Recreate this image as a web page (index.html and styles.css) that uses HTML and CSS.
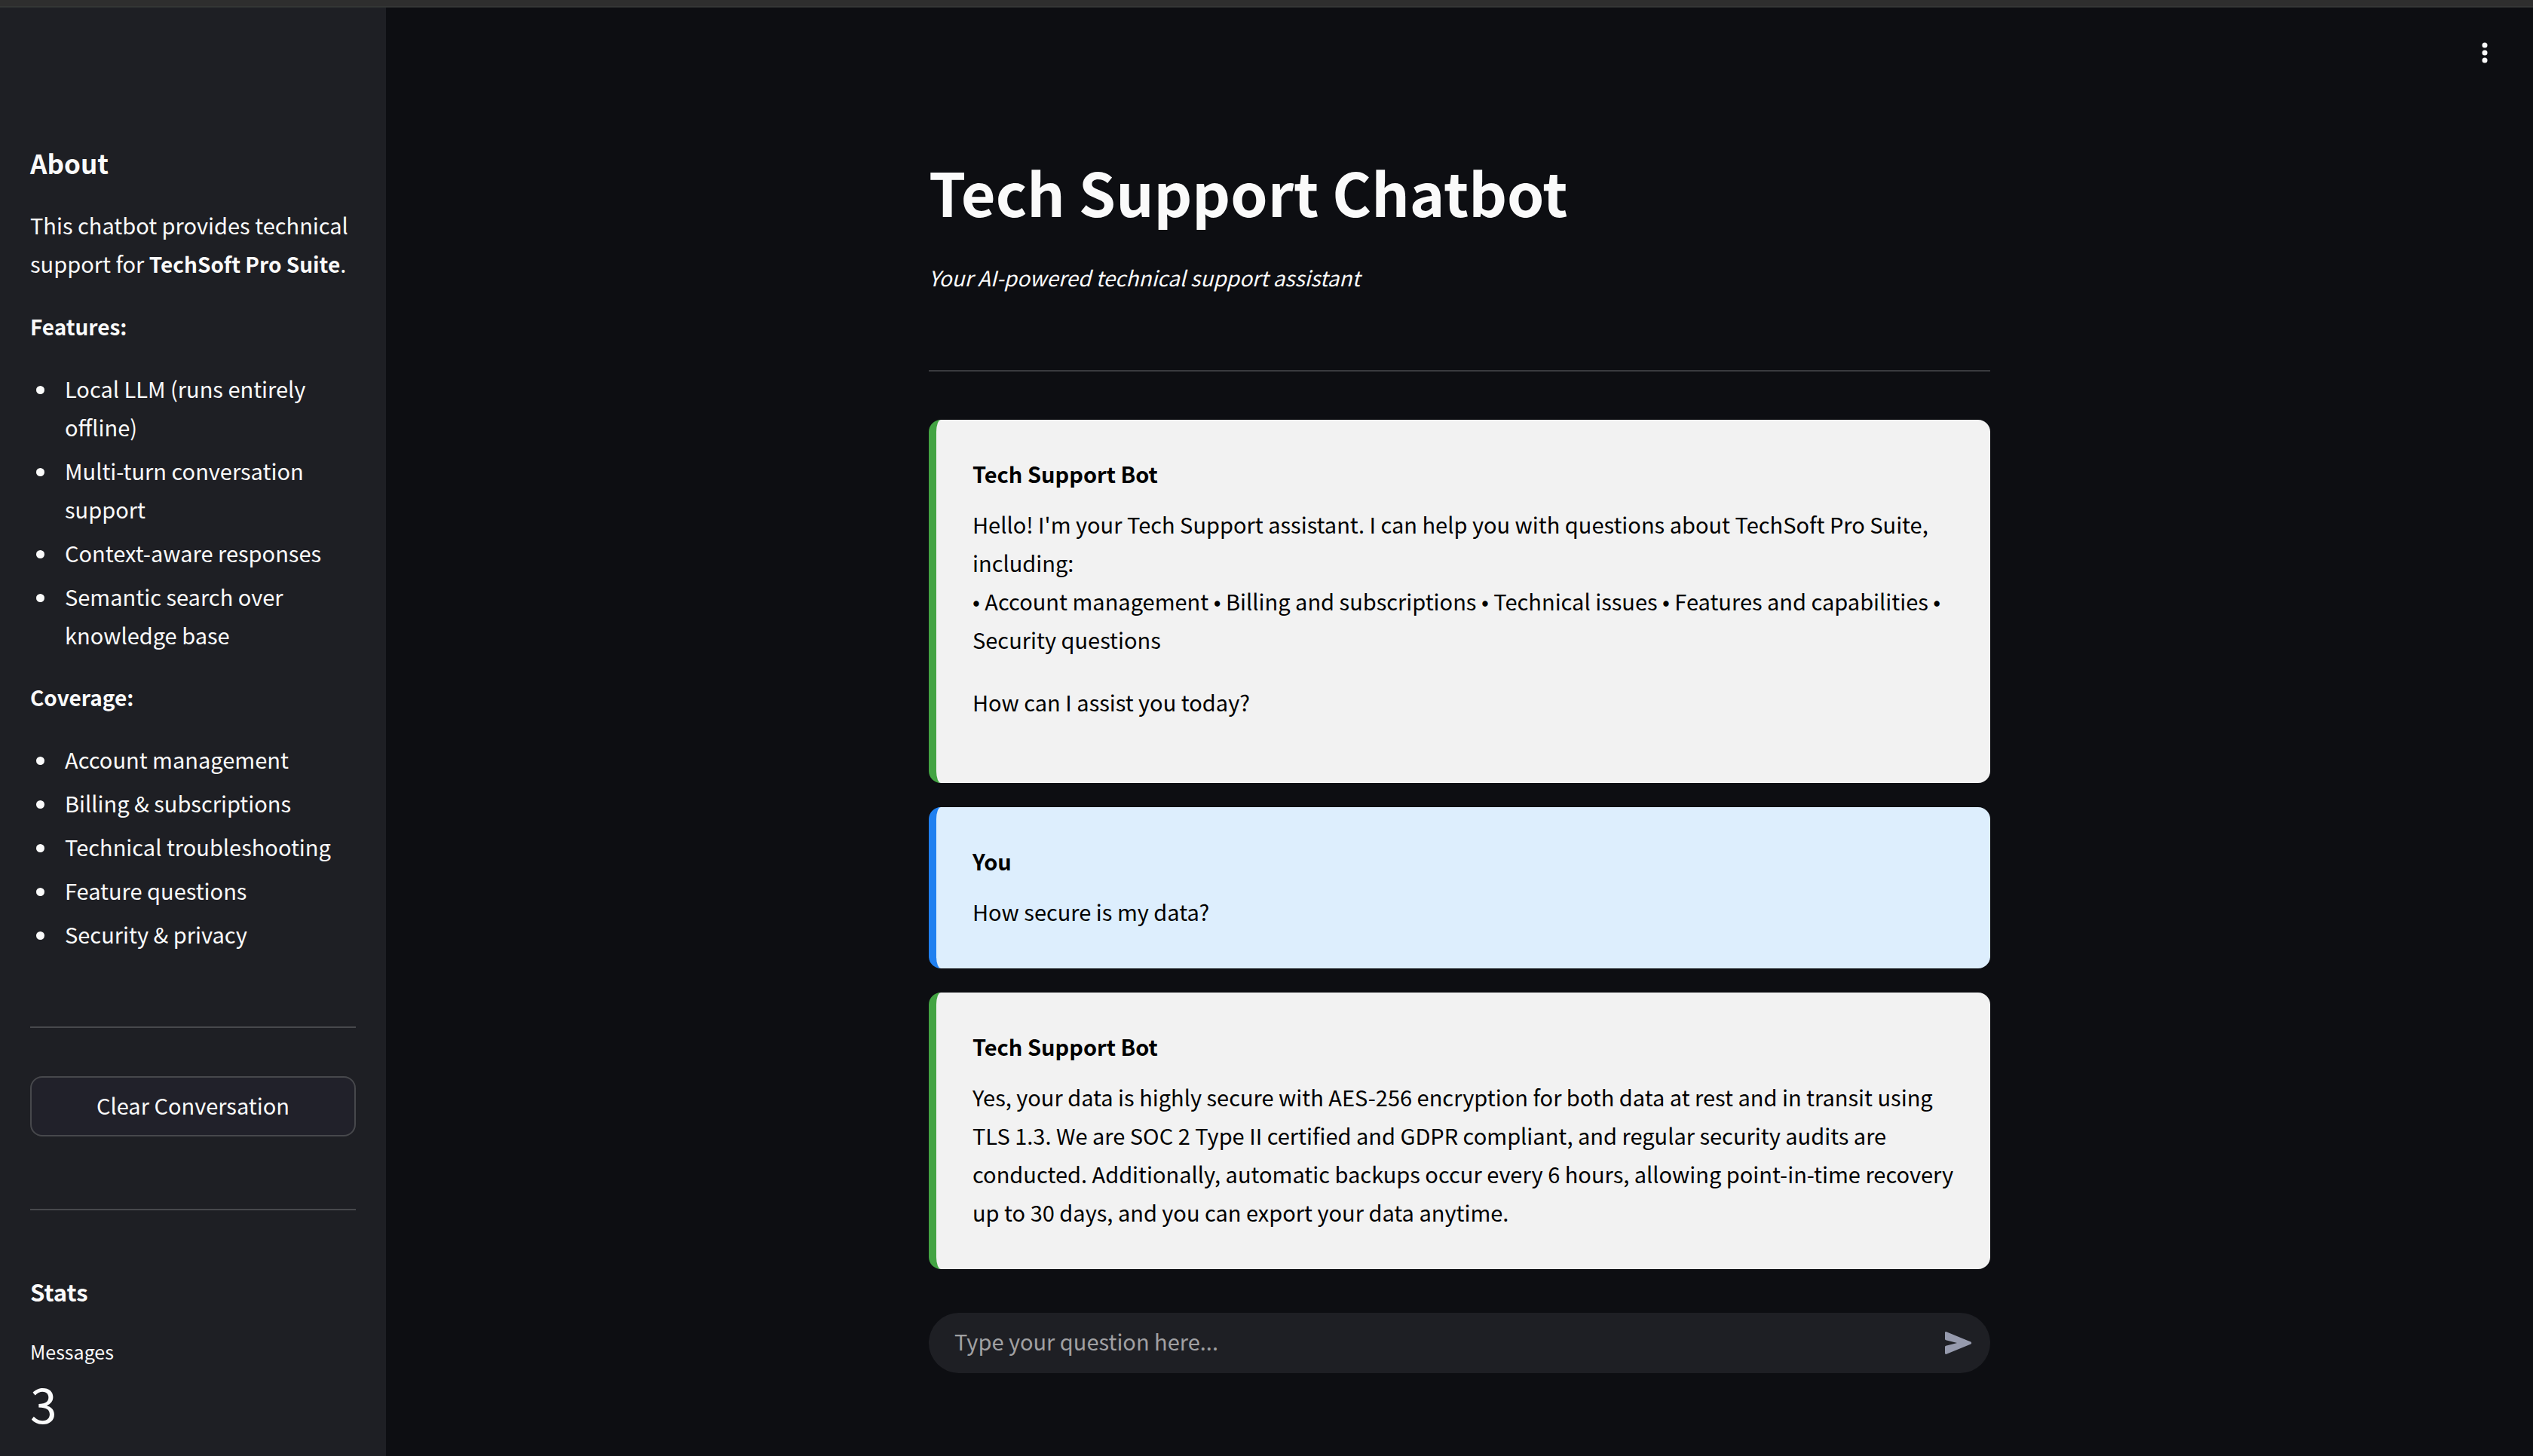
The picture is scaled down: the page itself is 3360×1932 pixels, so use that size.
FILE: index.html
```html
<!DOCTYPE html>
<html lang="en">
<head>
<meta charset="utf-8">
<meta name="viewport" content="width=device-width, initial-scale=1">
<title>Tech Support Chatbot</title>
<link rel="stylesheet" href="styles.css">
</head>
<body>
<div class="topbar"></div>
<div class="app">
  <aside class="sidebar">
    <h2 class="sidebar-title">About</h2>
    <p>This chatbot provides technical support for <strong>TechSoft Pro Suite</strong>.</p>
    <p><strong>Features:</strong></p>
    <ul class="list">
      <li>Local LLM (runs entirely offline)</li>
      <li>Multi-turn conversation support</li>
      <li>Context-aware responses</li>
      <li>Semantic search over knowledge base</li>
    </ul>
    <p><strong>Coverage:</strong></p>
    <ul class="list">
      <li>Account management</li>
      <li>Billing &amp; subscriptions</li>
      <li>Technical troubleshooting</li>
      <li>Feature questions</li>
      <li>Security &amp; privacy</li>
    </ul>
    <hr class="rule">
    <button class="clear" type="button">Clear Conversation</button>
    <hr class="rule">
    <h3 class="stats-title">Stats</h3>
    <dl class="metric">
      <dt>Messages</dt>
      <dd>3</dd>
    </dl>
  </aside>
  <main class="main">
    <header class="toolbar">
      <button class="menu" type="button" aria-label="Main menu">
        <svg width="40" height="40" viewBox="0 0 40 40" fill="currentColor" aria-hidden="true"><circle cx="20" cy="10" r="3.5"/><circle cx="20" cy="20" r="3.5"/><circle cx="20" cy="30" r="3.5"/></svg>
      </button>
    </header>
    <div class="column">
      <h1 class="title">Tech Support Chatbot</h1>
      <p class="subtitle"><em>Your AI-powered technical support assistant</em></p>
      <hr class="rule">
      <section class="messages">
        <article class="message bot">
          <strong class="author">Tech Support Bot</strong>
          <p>Hello! I'm your Tech Support assistant. I can help you with questions about TechSoft Pro Suite, including:<br>• Account management • Billing and subscriptions • Technical issues • Features and capabilities • Security questions</p>
          <p class="closing">How can I assist you today?</p>
        </article>
        <article class="message user">
          <strong class="author">You</strong>
          <p>How secure is my data?</p>
        </article>
        <article class="message bot">
          <strong class="author">Tech Support Bot</strong>
          <p>Yes, your data is highly secure with AES-256 encryption for both data at rest and in transit using TLS 1.3. We are SOC 2 Type II certified and GDPR compliant, and regular security audits are conducted. Additionally, automatic backups occur every 6 hours, allowing point-in-time recovery up to 30 days, and you can export your data anytime.</p>
        </article>
      </section>
      <form class="composer">
        <input type="text" aria-label="Your question" placeholder="Type your question here...">
        <button class="send" type="button" aria-label="Send message">
          <svg width="36" height="30" viewBox="0 0 36 30" fill="currentColor" aria-hidden="true"><path d="M0 1.6Q0 -.4 2 .3L34.300 13.600Q36 15 34.300 16.400L2 29.700Q0 30.400 0 28.400V20.200Q0 19 1.200 18.700L16 15L1.200 11.300Q0 11 0 9.800Z"/></svg>
        </button>
      </form>
    </div>
  </main>
</div>
</body>
</html>
```

FILE: styles.css
```css
* {
  box-sizing: border-box;
}

body {
  margin: 0;
  min-height: 100vh;
  display: flex;
  flex-direction: column;
  background: #0d0e12;
  color: #fafafa;
  font-family: "Noto Sans CJK JP", "Noto Sans", sans-serif;
  font-size: 29px;
  line-height: 51px;
}

h1, h2, h3, p, ul, dl, dd {
  margin: 0;
}

button, input {
  font: inherit;
  color: inherit;
}

.topbar {
  height: 10px;
  background: #2e2e2e;
  border-bottom: 2px solid #343635;
}

.app {
  flex: 1;
  display: flex;
}

.sidebar {
  flex: 0 0 512px;
  padding: 176px 40px 0;
  background: #1e1f24;
}

.sidebar p {
  margin-bottom: 32px;
}

.sidebar strong {
  font-size: 28px;
  line-height: 40px;
}

.sidebar .sidebar-title {
  margin-bottom: 27px;
  font-size: 35px;
  line-height: 60px;
}

.list {
  padding-left: 37px;
  margin-bottom: 31px;
}

.list li {
  padding-left: 9px;
}

.list li + li {
  margin-top: 7px;
}

.rule {
  height: 2px;
  margin: 0;
  border: 0;
  background: #47484c;
}

.list + .rule {
  margin-top: 97px;
}

.clear {
  display: block;
  width: 100%;
  height: 80px;
  margin: 64px 0 96px;
  padding: 0 0 4px;
  border: 2px solid #47484c;
  border-radius: 16px;
  background: #21212a;
}

.stats-title {
  margin-top: 86px;
  font-size: 31px;
  line-height: 44px;
}

.metric {
  margin-top: 33px;
}

.metric dt {
  font-size: 25px;
  line-height: 48px;
}

.metric dd {
  font-size: 64px;
  line-height: 88px;
}

.main {
  flex: 1;
  min-width: 0;
}

.toolbar {
  display: flex;
  justify-content: flex-end;
  padding: 40px 44px 0;
}

.menu, .send {
  display: flex;
  padding: 0;
  border: 0;
  background: none;
}

.column {
  max-width: 1408px;
  margin: 0 auto;
  padding-top: 111px;
}

.title {
  font-size: 79px;
  line-height: 106px;
}

.subtitle {
  margin: 36px 0 97px;
  font-size: 28px;
}

.column .rule {
  background: #3a3b3f;
}

.messages {
  display: flex;
  flex-direction: column;
  gap: 32px;
  margin-top: 64px;
}

.message {
  padding: 46px 48px 50px;
  border-left: 10px solid;
  border-radius: 16px;
  color: #000;
}

.bot {
  border-color: #43a443;
  background: #f2f2f2;
}

.user {
  border-color: #2080f0;
  background: #ddeefd;
}

.author {
  display: block;
  margin-bottom: 16px;
}

.message .closing {
  margin: 32px 0;
}

.composer {
  display: flex;
  align-items: center;
  height: 80px;
  margin-top: 58px;
  padding: 0 24px 0 34px;
  border-radius: 40px;
  background: #1e1f24;
}

.composer input {
  flex: 1;
  min-width: 0;
  padding: 0 0 6px;
  border: 0;
  outline: 0;
  background: none;
}

.composer input::placeholder {
  color: #a0a0a2;
  opacity: 1;
}

.send {
  color: #969aad;
}
```
